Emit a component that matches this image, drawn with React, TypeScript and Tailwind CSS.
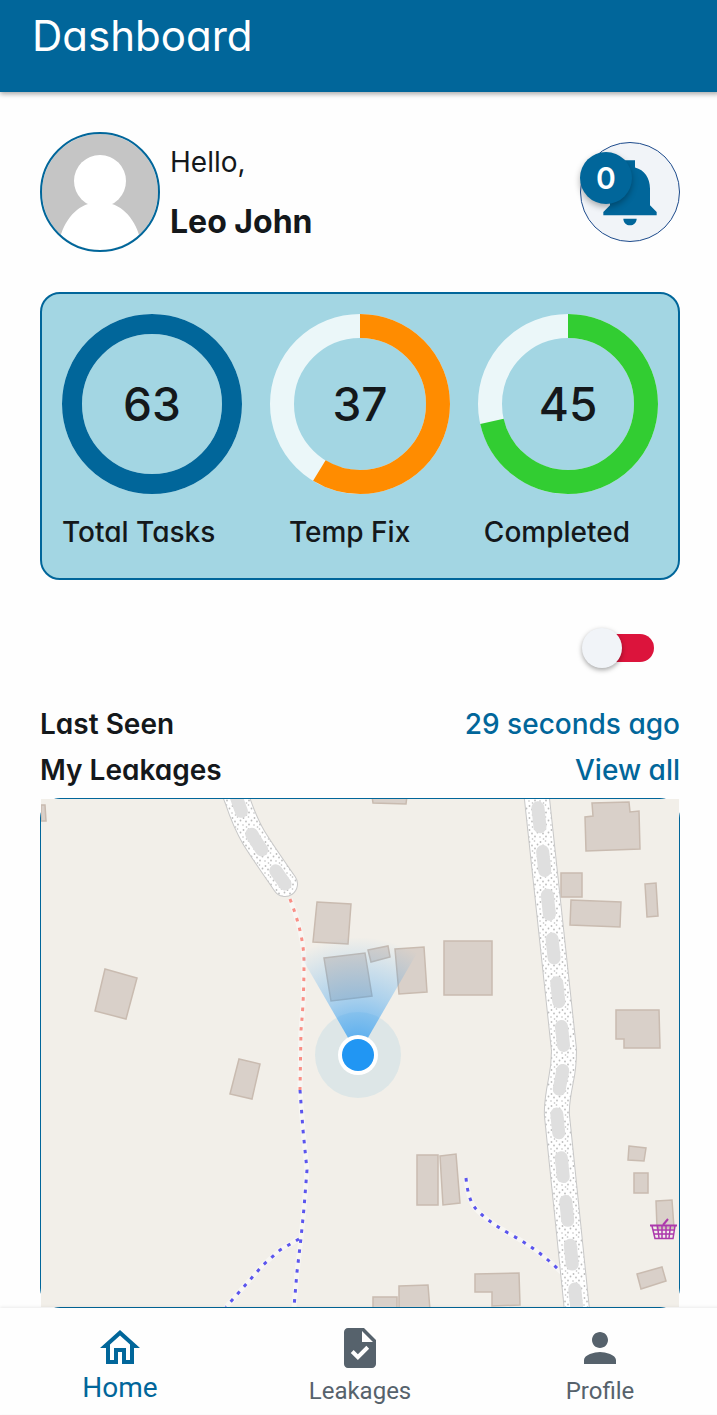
import { useState, type FC } from "react";
import { MdOutlineHome, MdPerson, MdTask } from "react-icons/md";
import { type IconType } from "react-icons";

interface RingProps {
	value: number;
	total: number;
	color: string;
	thickness: number;
}

const stats: (RingProps & { label: string })[] = [
	{ label: "Total Tasks", value: 63, total: 63, color: "#01669a", thickness: 20 },
	{ label: "Temp Fix", value: 37, total: 63, color: "#ff8c00", thickness: 24 },
	{ label: "Completed", value: 45, total: 63, color: "#32cd32", thickness: 24 },
];

const buildings = [
	"41,805 45,805 46,821 41,821",
	"372,796 407,796 406,804 373,803",
	"317,902 351,904 348,944 313,942",
	"105,969 137,978 126,1019 95,1011",
	"324,958 365,953 372,996 331,1001",
	"368,950 388,946 390,957 371,962",
	"395,949 424,947 427,992 399,994",
	"444,941 492,941 492,995 444,995",
	"592,803 629,802 630,812 639,811 640,849 586,851 585,817 593,816",
	"561,873 582,873 582,897 561,897",
	"571,900 621,902 620,927 570,925",
	"645,884 656,883 658,916 647,917",
	"616,1010 659,1010 660,1048 624,1048 624,1039 616,1039",
	"239,1059 260,1064 252,1099 230,1094",
	"417,1155 438,1155 438,1205 417,1205",
	"440,1156 456,1154 460,1203 443,1205",
	"373,1297 397,1297 397,1310 373,1310",
	"399,1286 428,1285 430,1310 399,1310",
	"475,1274 519,1273 520,1305 492,1306 492,1292 475,1292",
	"629,1146 646,1148 644,1161 628,1160",
	"634,1173 648,1173 648,1193 634,1193",
	"656,1201 672,1200 674,1228 657,1228",
	"637,1274 662,1267 666,1281 641,1289",
];

const roads = [
	{ d: "M232 786 L237 799 Q245 823 254 838 Q264 854 285 884", offset: 36 },
	{ d: "M535 786 L537 799 L564 1050 Q564 1066 561 1080 Q556 1105 557 1116 L578 1320", offset: 22 },
];

const blueTrails = [
	"M300 1090 L303 1130 L307 1170 L304 1208 L301 1238 L297 1272 L294 1307",
	"M299 1239 L280 1250 L263 1265 L226 1307",
	"M466 1178 Q468 1200 476 1209 Q486 1220 508 1233 Q540 1250 564 1275",
];

const redTrail = "M290 899 Q304 935 304 962 Q304 1000 301 1030 L300 1090";

const Ring: FC<RingProps> = ({ value, total, color, thickness }) => {
	const radius = 90 - thickness / 2;

	return (
		<div className="grid size-[180px] place-items-center">
			<svg viewBox="0 0 180 180" className="col-start-1 row-start-1 size-full" aria-hidden="true">
				<g fill="none" strokeWidth={thickness} transform="rotate(-90 90 90)">
					<circle cx="90" cy="90" r={radius} stroke="#ebf7f9" />
					<circle
						cx="90"
						cy="90"
						r={radius}
						stroke={color}
						pathLength={total}
						strokeDasharray={value === total ? undefined : `${value} ${total}`}
					/>
				</g>
			</svg>
			<span className="col-start-1 row-start-1 text-[46px] leading-none font-medium">{value}</span>
		</div>
	);
};

const Avatar: FC = () => (
	<svg viewBox="0 0 120 120" className="size-[120px] shrink-0" role="img" aria-label="Leo John">
		<defs>
			<clipPath id="avatar-clip">
				<circle cx="60" cy="60" r="58" />
			</clipPath>
		</defs>
		<g clipPath="url(#avatar-clip)">
			<rect width="120" height="120" fill="#c5c5c5" />
			<circle cx="60" cy="49" r="26" fill="#fff" />
			<path d="M18 120 C19 96 32 77 48 72 Q53 67 60 67 Q67 67 72 72 C88 77 101 96 102 120 Z" fill="#fff" />
		</g>
		<circle cx="60" cy="60" r="59" fill="none" stroke="#01669a" strokeWidth="2" />
	</svg>
);

const LeakageMap: FC = () => (
	<svg viewBox="41 799 638 508" className="block w-full bg-[#f2efe9]" role="img" aria-label="Map">
		<defs>
			<pattern id="gravel" width="11" height="12" patternUnits="userSpaceOnUse">
				<rect width="11" height="12" fill="#fff" />
				<g fill="#bdbdbd">
					<circle cx="1.5" cy="2" r="0.9" />
					<circle cx="6.5" cy="1" r="0.8" />
					<circle cx="9.5" cy="4.5" r="0.9" />
					<circle cx="4" cy="5.5" r="0.9" />
					<circle cx="1" cy="9" r="0.8" />
					<circle cx="7" cy="8.5" r="0.9" />
					<circle cx="4.5" cy="11" r="0.8" />
				</g>
			</pattern>
			<radialGradient id="beam" gradientUnits="userSpaceOnUse" cx="358" cy="1055" r="118">
				<stop offset="0" stopColor="#2196f3" stopOpacity="0.8" />
				<stop offset="0.5" stopColor="#2196f3" stopOpacity="0.34" />
				<stop offset="1" stopColor="#2196f3" stopOpacity="0" />
			</radialGradient>
		</defs>

		<g fill="#d9d0c9" stroke="#c9bbb0" strokeWidth="1.5">
			{buildings.map((points) => (
				<polygon key={points} points={points} />
			))}
		</g>

		<g fill="none" strokeLinejoin="round">
			<g stroke="#fff" strokeOpacity="0.45" strokeWidth="5">
				<path d={redTrail} />
				{blueTrails.map((d) => (
					<path key={d} d={d} />
				))}
			</g>
			<path d={redTrail} stroke="#f98f86" strokeWidth="3" strokeDasharray="3.5 6.5" />
			{blueTrails.map((d) => (
				<path key={d} d={d} stroke="#5b55ee" strokeWidth="3" strokeDasharray="3.5 6.5" />
			))}
		</g>

		{roads.map(({ d, offset }) => (
			<g key={d} fill="none" strokeLinecap="round" strokeLinejoin="round">
				<path d={d} stroke="#c8c8c8" strokeWidth="26" />
				<path d={d} stroke="url(#gravel)" strokeWidth="24" />
				<path d={d} stroke="#dfdfdf" strokeWidth="13" strokeDasharray="19 25" strokeDashoffset={offset} />
			</g>
		))}

		{/* shop */}
		<g fill="none" stroke="#ac39ac" strokeWidth="1.5">
			<path d="M650 1225.5 H677" strokeWidth="2" />
			<path d="M652 1226 L655 1238.5 H673 L675 1226 M653 1230 H674 M654 1234 H673" />
			<path d="M657.5 1226 L659 1238 M662 1226 V1238 M666 1226 V1238 M670.5 1226 L669 1238" />
			<path d="M663 1225 L668 1219" strokeWidth="2" />
		</g>

		{/* current position */}
		<circle cx="358" cy="1055" r="43" fill="#2c9cd8" fillOpacity="0.1" />
		<path d="M358 1055 L299 953 A118 118 0 0 1 417 953 Z" fill="url(#beam)" />
		<circle cx="358" cy="1055" r="20" fill="#fff" />
		<circle cx="358" cy="1055" r="16" fill="#2196f3" />
	</svg>
);

interface NavItemProps {
	label: string;
	icon: IconType;
	active?: boolean;
}

const NavItem: FC<NavItemProps> = ({ label, icon: Icon, active }) => (
	<a
		href="#"
		aria-current={active ? "page" : undefined}
		className={
			active
				? "flex flex-col items-center text-[28px] leading-8 text-[#01669a]"
				: "flex flex-col items-center text-2xl leading-[38px] text-[#56626c]"
		}
	>
		<Icon className="size-12" />
		{label}
	</a>
);

export default function App() {
	const [online, setOnline] = useState(false);

	return (
		<div className="min-h-screen overflow-x-hidden bg-[#fefefe] font-['Inter','Open_Sans',sans-serif] text-[#14181b] [font-feature-settings:'cv11']">
			<div className="-mr-[3px]">
				<header className="bg-[#01669a] px-8 pt-1.5 pb-[26px] shadow-[0_2px_5px_rgba(0,0,0,0.35)]">
					<h1 className="text-[42px] leading-[60px] font-normal text-white">Dashboard</h1>
				</header>

				<main className="px-10 pt-10">
					<section className="flex items-center justify-between">
						<div className="flex items-center gap-2.5">
							<Avatar />
							<div className="flex flex-col gap-5">
								<p className="text-[28px] leading-10">Hello,</p>
								<p className="text-[32px] leading-10 font-bold">Leo John</p>
							</div>
						</div>

						<button
							type="button"
							aria-label="Notifications"
							className="relative grid size-[100px] place-items-center rounded-full border border-[#1d4b8c] bg-[#f1f4f8]"
						>
							<svg viewBox="0 0 24 24" className="size-20" fill="#01669a" aria-hidden="true">
								<path d="M12 22c1.1 0 2-.9 2-2h-4c0 1.1.89 2 2 2zm6-6v-5c0-3.07-1.64-5.64-4.5-6.32V2.5h-3v2.18C7.63 5.36 6 7.92 6 11v5l-2 2v1h16v-1l-2-2z" />
							</svg>
							<span className="absolute top-[9px] -left-px grid size-[52px] place-items-center rounded-full bg-[#01669a] text-[30px] font-semibold text-white shadow-[0_3px_6px_rgba(0,0,0,0.3)]">
								0
							</span>
						</button>
					</section>

					<section className="mt-10 rounded-[20px] border-2 border-[#01669a] bg-[#a3d6e3] pt-5 pb-6">
						<div className="flex justify-between px-5">
							{stats.map(({ label, ...ring }) => (
								<Ring key={label} {...ring} />
							))}
						</div>
						<div className="mt-4 flex justify-between pr-12 pl-5 text-[28px] leading-[44px] font-medium">
							{stats.map(({ label }) => (
								<span key={label}>{label}</span>
							))}
						</div>
					</section>

					<div className="mt-12 flex h-10 items-center justify-end pr-[26px]">
						<input
							type="checkbox"
							role="switch"
							aria-label="Online"
							checked={online}
							onChange={(e) => setOnline(e.target.checked)}
							className="relative h-7 w-[66px] cursor-pointer appearance-none rounded-full bg-[#dc143c] before:absolute before:-top-1.5 before:-left-1.5 before:size-10 before:rounded-full before:bg-[#f1f4f8] before:shadow-[0_2px_5px_rgba(0,0,0,0.35)] before:content-[''] checked:bg-[#32cd32] checked:before:left-8"
						/>
					</div>

					<div className="mt-[33px] flex flex-col pb-[5px] text-[28px] leading-[46px]">
						<div className="flex justify-between">
							<p className="font-semibold">Last Seen</p>
							<p className="font-medium text-[#01669a]">29 seconds ago</p>
						</div>
						<div className="flex justify-between">
							<h2 className="font-semibold">My Leakages</h2>
							<a href="#" className="font-medium text-[#01669a]">
								View all
							</a>
						</div>
					</div>

					<section className="rounded-[20px] border border-[#01669a]">
						<LeakageMap />
					</section>
				</main>

				<nav className="grid grid-cols-3 bg-[#fefefe] pt-4 pb-1 font-[Roboto,sans-serif] shadow-[0_-1px_3px_rgba(0,0,0,0.08)]">
					<NavItem label="Home" icon={MdOutlineHome} active />
					<NavItem label="Leakages" icon={MdTask} />
					<NavItem label="Profile" icon={MdPerson} />
				</nav>
			</div>
		</div>
	);
}
